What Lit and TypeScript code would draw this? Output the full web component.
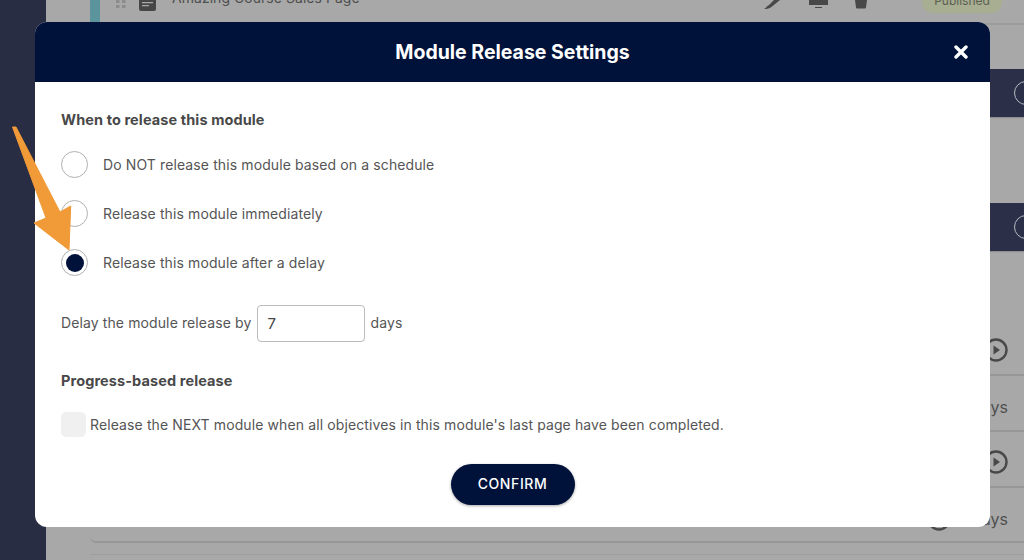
import { LitElement, html, css } from "lit";
import { customElement } from "lit/decorators.js";

@customElement("app-root")
export class AppRoot extends LitElement {
  static styles = css`
    :host { display: block; width: 1024px; height: 560px; position: relative; overflow: hidden; background: #a8a8a8; font-family: Inter, "Liberation Sans", sans-serif; color: #4a4a4a; }
    .page { display: flex; height: 560px; }
    .side { width: 46px; background: #282d44; flex: none; }
    .main { flex: 1; display: flex; flex-direction: column; padding-left: 44px; }
    .row { display: flex; align-items: center; justify-content: flex-end; border-bottom: 2px solid #979797; box-sizing: border-box; color: #505050; font-size: 16px; }
    .top { height: 25px; align-items: flex-end; justify-content: flex-start; overflow: hidden; border-bottom-color: #9c9c9c; }
    .teal { width: 10px; height: 22px; background: #5b949c; align-self: flex-start; }
    .grip { margin-left: 16px; width: 10px; height: 9px; align-self: flex-start; }
    .doc { margin-left: 13px; width: 17px; height: 11px; align-self: flex-start; }
    .title { margin-left: 16px; align-self: flex-start; margin-top: -11px; font-size: 14px; letter-spacing: .04px; white-space: nowrap; }
    .spacer { flex: 1; }
    .tools { align-self: flex-start; display: flex; gap: 27px; margin-right: 55px; align-items: flex-start; }
    .pill { align-self: flex-start; width: 80px; height: 13px; background: #a7ae91; border-radius: 0 0 10px 10px; margin-right: 22px; overflow: hidden; font-size: 12px; text-align: center; line-height: 0; padding-top: 1px; box-sizing: border-box; color: #5d5f52; }
    .gap { height: 44px; }
    .dark { height: 48px; background: #2b3048; border: 0; box-shadow: 0 1px 1px #8e8e8e; overflow: hidden; }
    .ring { width: 24px; height: 24px; box-sizing: border-box; border: 1.5px solid #b8bac2; border-radius: 50%; flex: none; margin-right: -14px; }
    .g2 { height: 86px; }
    .g3 { height: 69px; }
    .r { height: 56px; padding-right: 16px; padding-top: 8px; }
    .r.icon { padding-top: 6px; }
    .r.last { height: 55px; border-bottom-left-radius: 6px; gap: 21px; }
    .play { width: 24px; height: 24px; flex: none; }
    .bottom { height: 11px; border-bottom: 1px solid #9e9e9e; }

    .modal { position: absolute; left: 35px; top: 22px; width: 955px; height: 505px; background: #fff; border-radius: 12px; overflow: hidden; display: flex; flex-direction: column; }
    .head { height: 60px; flex: none; background: #00123a; color: #fff; display: flex; align-items: center; justify-content: center; position: relative; font-weight: 700; font-size: 19.5px; padding-bottom: 1px; box-sizing: border-box; }
    .close { position: absolute; right: 22px; top: 23px; width: 14px; height: 14px; }
    .body { flex: 1; display: flex; flex-direction: column; padding: 0 26px; font-size: 14px; letter-spacing: .11px; color: #555; }
    h3 { margin: 29px 0 0; font-size: 14.5px; line-height: 17px; font-weight: 700; color: #484848; letter-spacing: .1px; }
    .opts { display: flex; flex-direction: column; gap: 22px; margin-top: 23px; }
    .opt { display: flex; align-items: center; gap: 15px; height: 27px; }
    .radio { width: 27px; height: 27px; box-sizing: border-box; border: 1px solid #b0b0b0; border-radius: 50%; background: #fff; display: flex; align-items: center; justify-content: center; flex: none; }
    .radio i { width: 18px; height: 18px; border-radius: 50%; background: #00123a; display: block; }
    .delay { display: flex; align-items: center; margin-top: 28px; }
    .input { width: 108px; height: 37px; box-sizing: border-box; border: 1px solid #bcbcbc; border-radius: 4px; margin: 1px 5px -1px 6px; padding-left: 9px; display: flex; align-items: center; color: #444; font-size: 15px; }
    h3.p { margin-top: 31px; }
    .check { display: flex; align-items: center; gap: 4px; margin-top: 23px; }
    .box { width: 25px; height: 25px; background: #f0f0f0; border-radius: 5px; flex: none; }
    .foot { display: flex; justify-content: center; margin-top: 27px; }
    .btn { width: 124px; height: 41px; box-sizing: border-box; padding-bottom: 2px; border-radius: 21px; background: #00123a; color: #fff; display: flex; align-items: center; justify-content: center; font-size: 14px; font-weight: 500; letter-spacing: .6px; box-shadow: 0 1px 3px rgba(0,0,0,.35); }
    .arrow { position: absolute; left: 0; top: 120px; width: 80px; height: 140px; }
  `;

  private play() {
    return html`<svg class="play" viewBox="0 0 24 24"><circle cx="12" cy="12" r="10.5" fill="none" stroke="#484848" stroke-width="2.4"/><path d="M9.5 7.5v9l6.5-4.5z" fill="#484848"/></svg>`;
  }

  render() {
    return html`
      <div class="page">
        <div class="side"></div>
        <div class="main">
          <div class="row top">
            <div class="teal"></div>
            <svg class="grip" viewBox="0 0 10 9"><g fill="#8c8c8c"><rect x="0" y="0" width="3.5" height="3"/><rect x="6" y="0" width="3.5" height="3"/><rect x="0" y="5" width="3.5" height="3"/><rect x="6" y="5" width="3.5" height="3"/></g></svg>
            <svg class="doc" viewBox="0 0 17 11"><path d="M0 0h17v9q0 2-2 2H2q-2 0-2-2z" fill="#464646"/><path d="M3 2h11v1.200H3zM3 5h7v1.200H3z" fill="#a8a8a8"/></svg>
            <div class="title">Amazing Course Sales Page</div>
            <div class="spacer"></div>
            <div class="tools">
              <svg width="18" height="9" viewBox="0 0 18 9"><path d="M5 5L10 0h6L8 6.500C6 8.500 3 9 0 9c2-1 2.500-2.500 5-4z" fill="#484848"/></svg>
              <svg width="19" height="8" viewBox="0 0 19 8"><path d="M0 0h19v5H0zM6 7h7v1H6z" fill="#484848"/></svg>
              <svg width="12" height="9" viewBox="0 0 12 9"><path d="M0 0h12l-1 7.500q0 1-1 1H2q-1 0-1-1z" fill="#484848"/></svg>
            </div>
            <div class="pill">Published</div>
          </div>
          <div class="gap"></div>
          <div class="row dark"><div class="ring"></div></div>
          <div class="g2"></div>
          <div class="row dark"><div class="ring"></div></div>
          <div class="g3"></div>
          <div class="row r icon">${this.play()}</div>
          <div class="row r"><span>days</span></div>
          <div class="row r icon">${this.play()}</div>
          <div class="row r last">${this.play()}<span>days</span></div>
          <div class="bottom"></div>
        </div>
      </div>

      <div class="modal">
        <div class="head">
          Module Release Settings
          <svg class="close" viewBox="0 0 14 14"><path d="M2 2l10 10M12 2L2 12" stroke="#fff" stroke-width="3.400" stroke-linecap="round"/></svg>
        </div>
        <div class="body">
          <h3>When to release this module</h3>
          <div class="opts">
            <div class="opt"><span class="radio"></span>Do NOT release this module based on a schedule</div>
            <div class="opt"><span class="radio"></span>Release this module immediately</div>
            <div class="opt"><span class="radio"><i></i></span>Release this module after a delay</div>
          </div>
          <div class="delay">Delay the module release by<span class="input">7</span>days</div>
          <h3 class="p">Progress-based release</h3>
          <div class="check"><span class="box"></span>Release the NEXT module when all objectives in this module's last page have been completed.</div>
          <div class="foot"><div class="btn">CONFIRM</div></div>
        </div>
      </div>

      <svg class="arrow" viewBox="0 0 80 140">
        <path d="M12.500 7L16 7L60 92L70.700 86L69 130L34 103L46 98Z" fill="#f19a38" stroke="#f19a38" stroke-width="1" stroke-linejoin="round"/>
      </svg>
    `;
  }
}
